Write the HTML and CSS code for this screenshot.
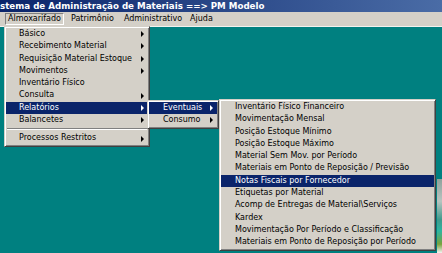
FILE: index.html
```html
<!DOCTYPE html>
<html lang="pt-BR">
<head>
    <meta charset="UTF-8">
    <title>Sistema de Administração de Materiais</title>
    <link rel="stylesheet" href="styles.css">
</head>
<body>
    <div class="window">
        <div class="titlebar">stema de Administração de Materiais ==&gt; PM Modelo</div>

        <div class="menubar">
            <span class="top-item open">Almoxarifado</span>
            <span class="top-item">Patrimônio</span>
            <span class="top-item">Administrativo</span>
            <span class="top-item">Ajuda</span>
        </div>

        <div class="desktop">
            <div class="side-picture"></div>

            <!-- Almoxarifado -->
            <ul class="menu main-menu">
                <li class="has-sub">Básico</li>
                <li class="has-sub">Recebimento Material</li>
                <li class="has-sub">Requisição Material Estoque</li>
                <li class="has-sub">Movimentos</li>
                <li>Inventário Físico</li>
                <li class="has-sub">Consulta</li>
                <li class="has-sub active">Relatórios</li>
                <li class="has-sub">Balancetes</li>
                <li class="sep"></li>
                <li class="has-sub">Processos Restritos</li>
            </ul>

            <!-- Relatórios -->
            <ul class="menu sub-menu">
                <li class="has-sub active">Eventuais</li>
                <li class="has-sub">Consumo</li>
            </ul>

            <!-- Eventuais -->
            <ul class="menu report-menu">
                <li>Inventário Físico Financeiro</li>
                <li>Movimentação Mensal</li>
                <li>Posição Estoque Mínimo</li>
                <li>Posição Estoque Máximo</li>
                <li>Material Sem Mov. por Período</li>
                <li>Materiais em Ponto de Reposição / Previsão</li>
                <li class="active">Notas Fiscais por Fornecedor</li>
                <li>Etiquetas por Material</li>
                <li>Acomp de Entregas de Material\Serviços</li>
                <li>Kardex</li>
                <li>Movimentação Por Período e Classificação</li>
                <li>Materiais em Ponto de Reposição por Período</li>
            </ul>
        </div>
    </div>
</body>
</html>
```

FILE: styles.css
```css
body {
    margin: 0;
    padding: 0;
    font-family: "DejaVu Sans", sans-serif;
    font-size: 8px;
    color: #000;
    overflow: hidden;
}

.window {
    width: 442px;
    height: 253px;
    display: flex;
    flex-direction: column;
}

.titlebar {
    height: 12px;
    line-height: 12px;
    background: linear-gradient(to right, #0a246a, #4a6ca6);
    color: #fff;
    font-weight: bold;
    font-size: 8.7px;
    white-space: nowrap;
}

.menubar {
    height: 14px;
    background-color: #d4d0c8;
    border-bottom: 1px solid #f4f2ee;
    padding-left: 5px;
    display: flex;
    align-items: center;
}

.top-item {
    padding: 0 2px;
    margin-right: 4px;
    height: 10px;
    line-height: 10px;
    border: 1px solid transparent;
}

.top-item:nth-child(3) {
    margin-right: 2px;
}

.top-item.open {
    border-color: #808080 #fff #fff #808080;
}

.desktop {
    flex: 1;
    position: relative;
    background-color: #008080;
}

/* bit of a desktop picture peeking out on the right */
.side-picture {
    position: absolute;
    left: 437px;
    top: 152px;
    width: 5px;
    height: 74px;
    background: linear-gradient(to bottom, #8fa29c 0%, #b8c4c0 30%, #3f9a8c 55%, #2fb5a0 70%, #79a23c 88%, #f4f4f4 100%);
}

/* Menus */
.menu {
    position: absolute;
    margin: 0;
    padding: 1px;
    list-style: none;
    background-color: #d4d0c8;
    border: 1px solid;
    border-color: #d4d0c8 #404040 #404040 #d4d0c8;
    box-shadow: inset 1px 1px #fff, inset -1px -1px #808080;
    box-sizing: border-box;
}

.menu li {
    position: relative;
    height: 12.3px;
    line-height: 12.3px;
    white-space: nowrap;
}

.menu li.active {
    background-color: #0a246a;
    color: #fff;
}

.menu li.has-sub::after {
    content: "";
    position: absolute;
    right: 4px;
    top: 50%;
    margin-top: -3px;
    border-left: 3px solid #000;
    border-top: 3px solid transparent;
    border-bottom: 3px solid transparent;
}

.menu li.active.has-sub::after {
    border-left-color: #fff;
}

.menu li.sep {
    height: 6px;
}

.menu li.sep::before {
    content: "";
    position: absolute;
    left: 1px;
    right: 1px;
    top: 2px;
    border-top: 1px solid #808080;
    border-bottom: 1px solid #fff;
}

.main-menu {
    left: 4px;
    top: -1px;
    width: 146px;
}

.main-menu li {
    padding-left: 13px;
}

.sub-menu {
    left: 147px;
    top: 73px;
    width: 72px;
}

.sub-menu li {
    padding-left: 14px;
}

.report-menu {
    left: 219px;
    top: 72px;
    width: 217px;
}

.report-menu li {
    padding-left: 14px;
}
```
